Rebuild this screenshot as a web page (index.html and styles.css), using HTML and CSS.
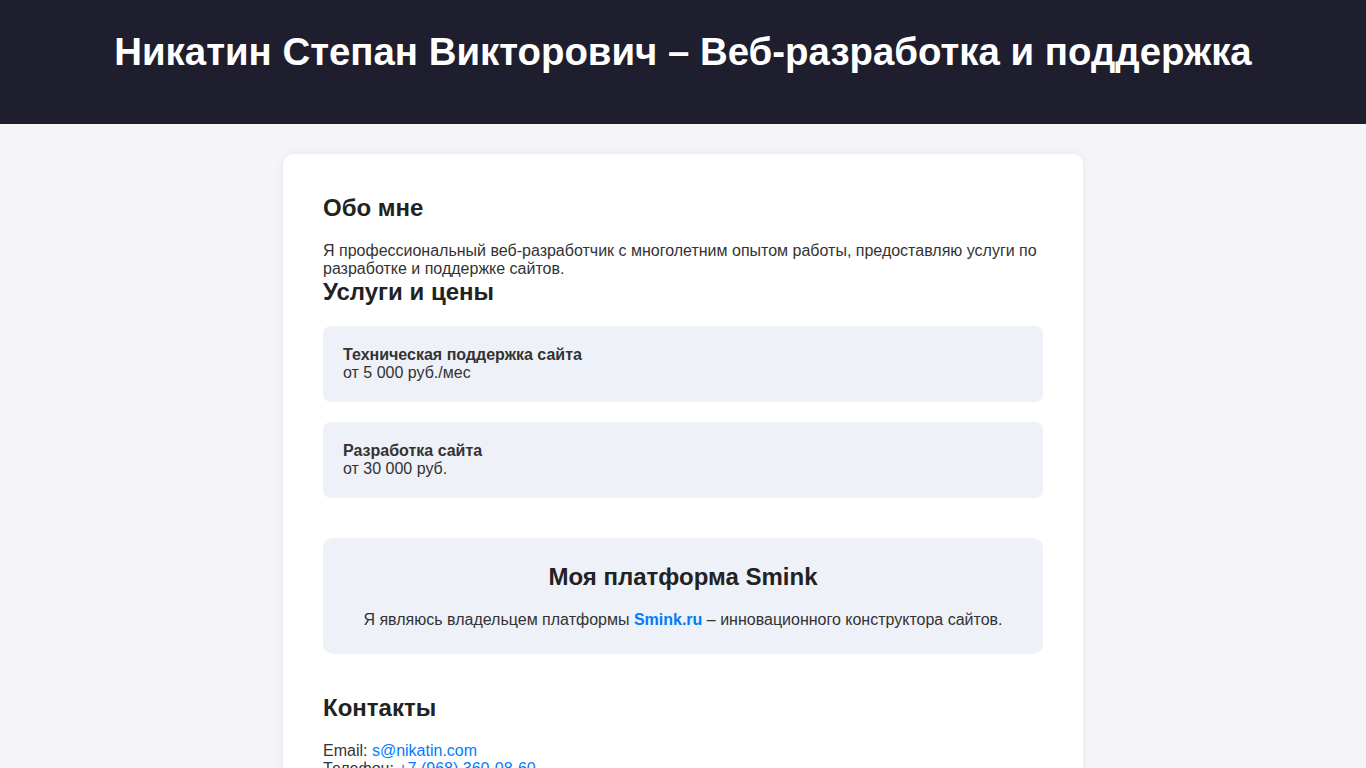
FILE: index.html
```html
<!DOCTYPE html>
<html lang="ru">
<head>
<meta charset="utf-8">
<title>Никатин Степан Викторович – Веб-разработка и поддержка</title>
<link rel="stylesheet" href="styles.css">
</head>
<body>
<header class="site-header">
  <h1 class="site-title">Никатин Степан Викторович – Веб-разработка и поддержка</h1>
</header>
<main class="card">
  <section class="section">
    <h2 class="section-title">Обо мне</h2>
    <p class="text">Я профессиональный веб-разработчик с многолетним опытом работы, предоставляю услуги по разработке и поддержке сайтов.</p>
  </section>
  <section class="section">
    <h2 class="section-title">Услуги и цены</h2>
    <div class="services">
      <div class="service">
        <div class="service-name">Техническая поддержка сайта</div>
        <div class="service-price">от 5 000 руб./мес</div>
      </div>
      <div class="service">
        <div class="service-name">Разработка сайта</div>
        <div class="service-price">от 30 000 руб.</div>
      </div>
    </div>
  </section>
  <section class="platform">
    <h2 class="section-title">Моя платформа Smink</h2>
    <p class="text">Я являюсь владельцем платформы <a class="link link-bold" href="#">Smink.ru</a> – инновационного конструктора сайтов.</p>
  </section>
  <section class="section">
    <h2 class="section-title">Контакты</h2>
    <p class="text">Email: <a class="link" href="#">s@nikatin.com</a><br>Телефон: <a class="link" href="#">+7 (968) 360-08-60</a></p>
  </section>
</main>
</body>
</html>
```
FILE: styles.css
```css
* { box-sizing: border-box; }
html, body { margin: 0; padding: 0; }
body {
  background: #f4f4f9;
  color: #333;
  font-family: "Liberation Sans", Arial, sans-serif;
  font-size: 16px;
}
.site-header {
  background: #1f1e2e;
  color: #fff;
  text-align: center;
  height: 124px;
  padding: 30px 20px 0;
}
.site-title {
  margin: 0;
  font-size: 38.4px;
  font-weight: bold;
}
.card {
  width: 800px;
  margin: 30px auto;
  background: #fff;
  border-radius: 10px;
  padding: 40px;
  box-shadow: 0 0 10px rgba(0, 0, 0, 0.06);
}
.section-title {
  margin: 0 0 20px;
  font-size: 24px;
  font-weight: bold;
  color: #222;
}
.text { margin: 0; }
.services {
  display: flex;
  flex-direction: column;
  gap: 20px;
}
.service {
  background: #eef1f8;
  border-radius: 8px;
  padding: 20px;
}
.service-name { font-weight: bold; }
.platform {
  background: #eef1f8;
  border-radius: 10px;
  padding: 25px;
  margin: 40px 0;
  text-align: center;
}
.link { color: #007bff; text-decoration: none; }
.link-bold { font-weight: bold; }
```
